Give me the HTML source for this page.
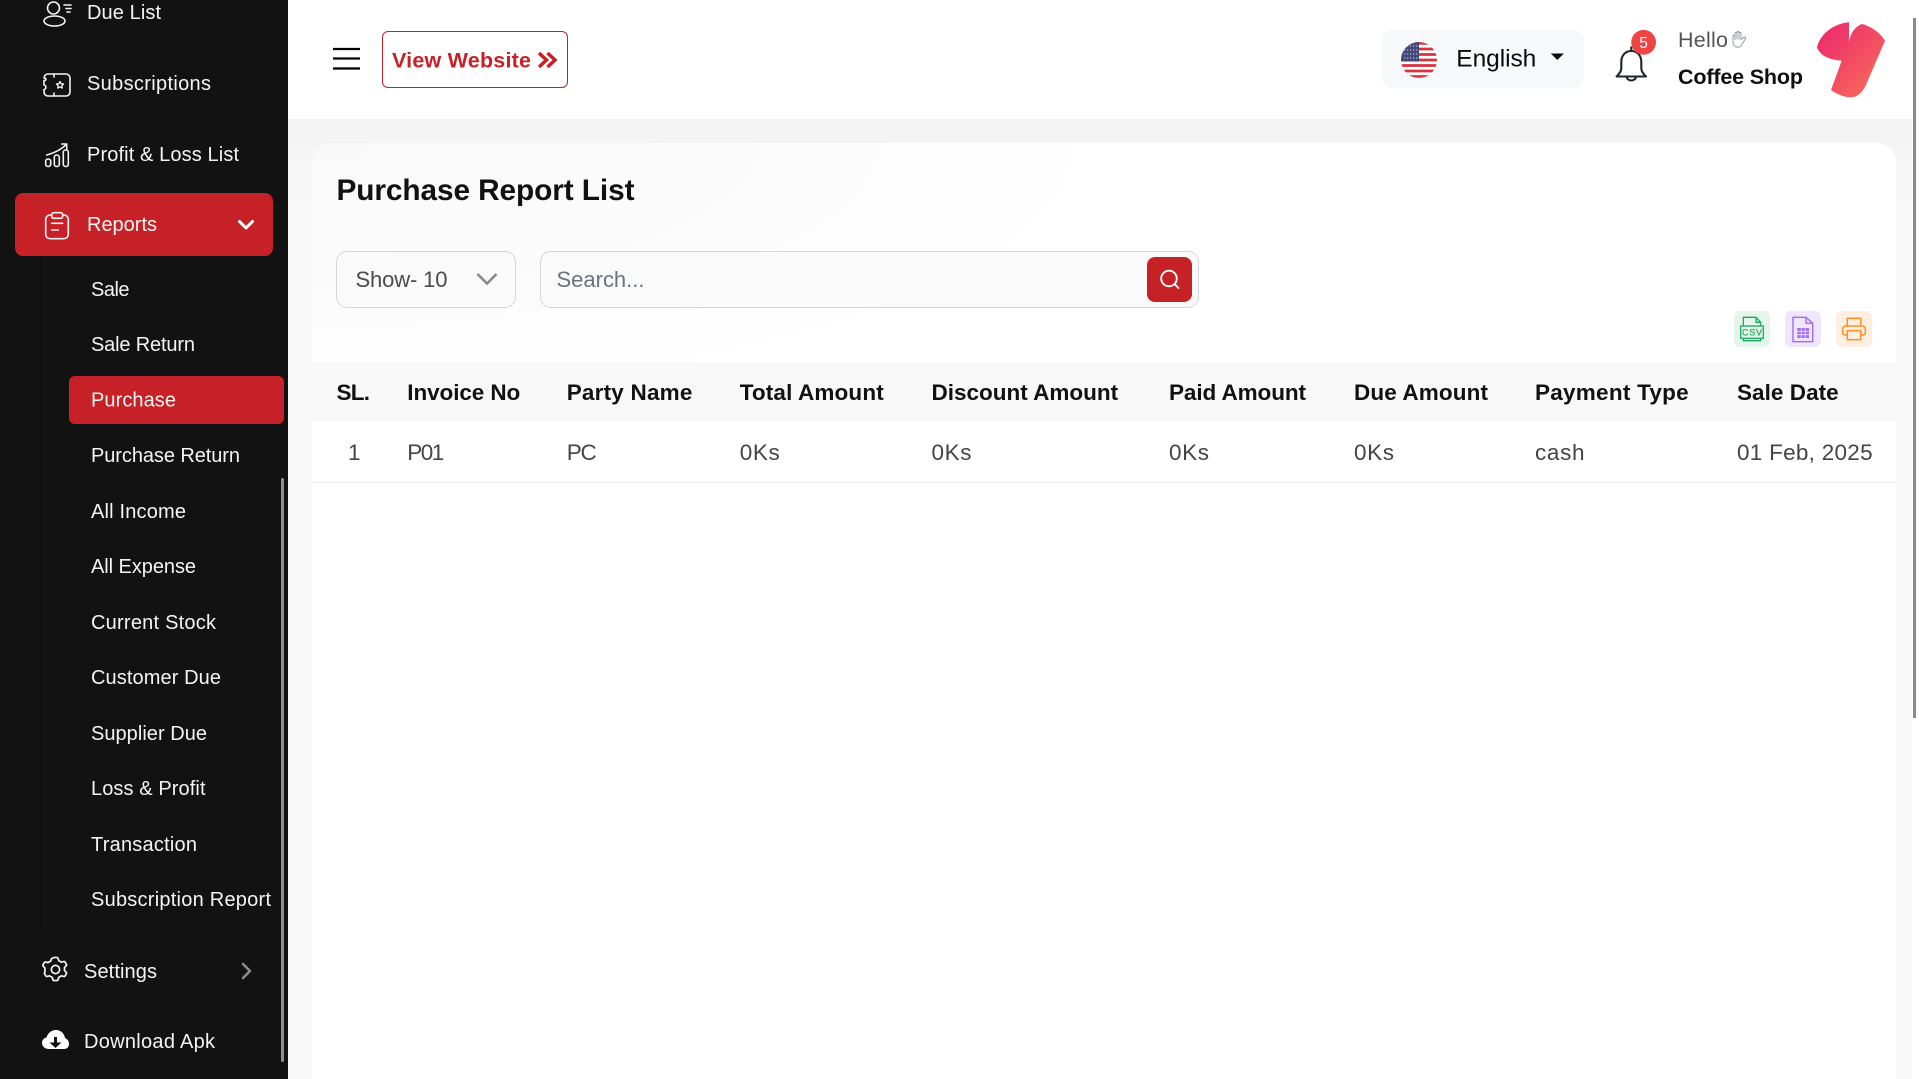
<!DOCTYPE html>
<html lang="en">
<head>
<meta charset="utf-8">
<title>Purchase Report List</title>
<style>
html,body{margin:0;padding:0;width:1919px;height:1079px;overflow:hidden;background:#fff}
div{position:absolute;box-sizing:border-box}
svg{position:absolute;left:0;top:0}
text{font-family:"Liberation Sans",Arial,sans-serif;white-space:pre}
.s{font-size:20px;fill:#f4f4f4}
.h{font-size:22.500px;font-weight:700;fill:#111}
.r{font-size:22.500px;fill:#444}
</style>
</head>
<body>
<div style="left:288px;top:119px;width:1624px;height:960px;background:linear-gradient(180deg,#f3f3f3 0,#f8f8f8 90px)"></div>
<div style="left:312px;top:143px;width:1584px;height:936px;background:radial-gradient(ellipse 800px 260px at 0 0,#f9f9f9,#fbfbfb 50%,#fff 100%),#fff;border-radius:20px 20px 0 0"></div>
<div style="left:312px;top:362px;width:1584px;height:60px;background:#f8f8f8"></div>
<div style="left:312px;top:422px;width:1584px;height:61px;background:#fff;border-bottom:1px solid #e8e8e8"></div>
<div style="left:336px;top:251px;width:180px;height:57px;background:#fafafa;border:1px solid #d6d6d6;border-radius:11px"></div>
<div style="left:540px;top:251px;width:659px;height:57px;background:#fafafa;border:1px solid #d6d6d6;border-radius:11px"></div>
<div style="left:1147px;top:257px;width:45px;height:45px;background:#c52127;border-radius:8px"></div>
<div style="left:382px;top:31px;width:186px;height:57px;border:1px solid #c52127;border-radius:6px"></div>
<div style="left:1382px;top:30px;width:202px;height:58px;background:#f7f8fa;border-radius:10px"></div>
<div style="left:1734px;top:311px;width:36px;height:36px;background:#e6f5ec;border-radius:6px"></div>
<div style="left:1785px;top:311px;width:36px;height:36px;background:#efe6fd;border-radius:6px"></div>
<div style="left:1836px;top:311px;width:36px;height:36px;background:#ffefe2;border-radius:6px"></div>
<div style="left:1913px;top:18px;width:3px;height:700px;background:#8a8a8a"></div>

<div style="left:0;top:0;width:288px;height:1079px;background:#121212"></div>
<div style="left:45px;top:256px;width:239px;height:675px;border:1px solid #171717;border-top:0;border-right:0"></div>
<div style="left:15px;top:193px;width:258px;height:63px;background:#c52127;border-radius:8px"></div>
<div style="left:69px;top:376px;width:215px;height:48px;background:#c52127;border-radius:6px"></div>
<div style="left:281px;top:478px;width:3px;height:584px;background:#8f8f8f;border-radius:2px"></div>

<svg width="1919" height="1079" viewBox="0 0 1919 1079" xmlns="http://www.w3.org/2000/svg">
<defs>
<linearGradient id="lg" gradientUnits="userSpaceOnUse" x1="1822" y1="30" x2="1880" y2="85"><stop offset="0" stop-color="#ec2c6c"/><stop offset="1" stop-color="#f8675a"/></linearGradient>
<clipPath id="fc"><circle cx="1419" cy="60" r="18"/></clipPath>
</defs>

<!-- sidebar icons -->
<g fill="none" stroke="#f4f4f4" stroke-width="1.600" stroke-linecap="round" stroke-linejoin="round">
<circle cx="53.500" cy="8" r="6"/><ellipse cx="54.500" cy="21" rx="10.500" ry="5"/>
<path d="M64 5h7M66 8.500h5M67 12h3"/>
<path d="M48 74H66a4 4 0 0 1 4 4V92a4 4 0 0 1-4 4H48a4 4 0 0 1-4-4V89.500c2.500 0 2.500-4.500 0-4.500V80.500c2.500 0 2.500-2.500 0-2.500a4 4 0 0 1 4-4z"/>
<path d="M54 74v3M54 93v3"/>
<path d="M60 81.500l1.100 2.200 2.500.3-1.800 1.700.5 2.400-2.300-1.200-2.300 1.200.5-2.400-1.800-1.700 2.500-.3z" stroke-width="1.300"/>
<rect x="45.700" y="159" width="5" height="7.500" rx="2.200"/><rect x="54.300" y="155" width="5" height="11.500" rx="2.200"/><rect x="63.300" y="150" width="5" height="16.500" rx="2.200"/>
<path d="M46.700 155C54 153 61 150 66.700 144M61.700 144H66.700V149"/>
<rect x="45.700" y="215" width="22.600" height="23.700" rx="4.500"/><rect x="51.700" y="212.700" width="11" height="5.600" rx="2" fill="#c52127"/>
<path d="M51.700 223.300H62.700M51.700 230H58.300"/>
<g transform="translate(42.500 956.500) scale(1.180)" stroke-width="1.450"><circle cx="11" cy="11" r="3.500"/><path d="M10 .8h2c.6 0 1 .3 1.200.8l.6 2c.8.3 1.500.7 2.100 1.200l2-.5c.5-.1 1 .1 1.300.5l1 1.700c.3.500.2 1-.2 1.400l-1.400 1.500c.1.800.1 1.600 0 2.400l1.400 1.500c.4.400.5.900.2 1.400l-1 1.700c-.3.400-.8.600-1.300.5l-2-.5c-.6.500-1.300.9-2.100 1.200l-.6 2c-.2.500-.6.800-1.200.8h-2c-.6 0-1-.3-1.200-.8l-.6-2c-.8-.3-1.500-.7-2.100-1.200l-2 .5c-.5.100-1-.1-1.300-.5l-1-1.700c-.3-.5-.2-1 .2-1.400L2.100 12.200c-.1-.8-.1-1.600 0-2.400L.7 8.300c-.4-.4-.5-.9-.2-1.400l1-1.700c.3-.4.8-.6 1.300-.5l2 .5c.6-.5 1.300-.9 2.100-1.200l.6-2C9 1.100 9.400.8 10 .8z"/></g>
</g>
<path d="M49 1049C44.500 1049 42 1046 42 1043C42 1040 44 1038 46.500 1037.500C48 1032.500 52 1030 56 1030C61 1030 64.500 1034 65 1038C67.500 1039 69 1041 69 1044C69 1047 67 1049 64 1049Z" fill="#fff"/>
<path d="M54 1037h3v5.500h4.500L55.500 1048l-6-5.500H54z" fill="#121212"/>
<path d="M239.500 221.500L246 228L252.500 221.500" fill="none" stroke="#fff" stroke-width="3" stroke-linecap="round" stroke-linejoin="round"/>
<path d="M243 964L250 971L243 978" fill="none" stroke="#8a8a8a" stroke-width="2.600" stroke-linecap="round" stroke-linejoin="round"/>

<!-- sidebar text -->
<text class="s" x="87" y="19" textLength="74" lengthAdjust="spacing">Due List</text>
<text class="s" x="87" y="90" textLength="124" lengthAdjust="spacing">Subscriptions</text>
<text class="s" x="87" y="161" textLength="152" lengthAdjust="spacing">Profit &amp; Loss List</text>
<text class="s" x="87" y="231" textLength="70" lengthAdjust="spacing">Reports</text>
<text class="s" x="91" y="296" textLength="38.500" lengthAdjust="spacing">Sale</text>
<text class="s" x="91" y="351" textLength="104" lengthAdjust="spacing">Sale Return</text>
<text class="s" x="91" y="406.500" textLength="85" lengthAdjust="spacing">Purchase</text>
<text class="s" x="91" y="462" textLength="149" lengthAdjust="spacing">Purchase Return</text>
<text class="s" x="91" y="518" textLength="95" lengthAdjust="spacing">All Income</text>
<text class="s" x="91" y="573" textLength="105" lengthAdjust="spacing">All Expense</text>
<text class="s" x="91" y="629" textLength="125" lengthAdjust="spacing">Current Stock</text>
<text class="s" x="91" y="684" textLength="130" lengthAdjust="spacing">Customer Due</text>
<text class="s" x="91" y="740" textLength="116" lengthAdjust="spacing">Supplier Due</text>
<text class="s" x="91" y="795" textLength="114.500" lengthAdjust="spacing">Loss &amp; Profit</text>
<text class="s" x="91" y="851" textLength="106" lengthAdjust="spacing">Transaction</text>
<text class="s" x="91" y="906" textLength="180" lengthAdjust="spacing">Subscription Report</text>
<text class="s" x="84" y="978" textLength="73" lengthAdjust="spacing">Settings</text>
<text class="s" x="84" y="1048" textLength="131" lengthAdjust="spacing">Download Apk</text>

<!-- header -->
<path d="M333 49H360M333 58.500H360M333 68.500H360" stroke="#000" stroke-width="2.200" fill="none"/>
<text x="392" y="67.500" font-size="21.500" font-weight="700" fill="#c52127" textLength="139" lengthAdjust="spacing">View Website</text>
<path d="M539 53L546.500 60L539 67M547.500 53L555 60L547.500 67" fill="none" stroke="#c52127" stroke-width="3.500"/>

<g clip-path="url(#fc)">
<rect x="1401" y="42" width="36" height="36" fill="#fff"/>
<path d="M1401 43.400h36M1401 49h36M1401 54.500h36M1401 60h36M1401 65.500h36M1401 71h36M1401 76.500h36" stroke="#d8333c" stroke-width="2.800"/>
<rect x="1401" y="42" width="18" height="19.500" fill="#41477b"/>
<path d="M1404 46h14M1404 50h14M1404 54h14M1404 58h14" stroke="#b9bcd4" stroke-width="1.300" stroke-dasharray="1.300 1.700"/>
</g>
<text x="1456.300" y="66.500" font-size="24.500" fill="#0b0b0b" textLength="80" lengthAdjust="spacing">English</text>
<path d="M1550.800 53.500H1563.800L1557.300 60Z" fill="#0b0b0b"/>

<path d="M1631.300 51C1624.800 51 1621.300 56 1621.300 62V68C1621.300 72 1618.800 74 1616.600 76.500H1646C1643.800 74 1641.300 72 1641.300 68V62C1641.300 56 1637.800 51 1631.300 51ZM1631.300 46.500V51M1626.800 77a4.500 3.500 0 0 0 9 0" fill="none" stroke="#1b2330" stroke-width="2.100" stroke-linejoin="round"/>
<circle cx="1643.600" cy="42.300" r="12.400" fill="#ef4444"/>
<text x="1643.600" y="48" font-size="15.500" fill="#fff" text-anchor="middle">5</text>

<text x="1678" y="47" font-size="21.500" fill="#555" textLength="50" lengthAdjust="spacing">Hello</text>
<g transform="translate(1731 31)" fill="none" stroke="#8c93a0" stroke-width=".9" stroke-linejoin="round"><path d="M5 16C3 15 2 13 2 11V5.500C2 4 4 4 4 5.500V2.500C4 1 6 1 6 2.500V1.500C6 0 8 0 8 1.500V2.500C8 1 10 1 10 2.500V8.500L12.500 6.500C14 5.500 15.500 7 14 8.500L10.500 14C10 15.500 9 16 8 16ZM4 5.500V9M6 2.500V8.500M8 1.500V8.500"/></g>
<text x="1678" y="84" font-size="21.500" font-weight="700" fill="#0f0f0f" textLength="125" lengthAdjust="spacing">Coffee Shop</text>
<path d="M1849 22.300C1832 24 1820 35 1817 47.300C1820 56 1830 60 1841.700 60.700L1831 90C1838 95 1846 97.500 1851 97.300C1860 97 1865 88 1867.300 81.700L1885 40.700C1880 32 1870 26 1861.700 24C1855 27 1850 33 1849 43.300Z" fill="url(#lg)"/>

<!-- heading + filters -->
<text x="336.500" y="200" font-size="29.800" font-weight="700" fill="#111" textLength="298" lengthAdjust="spacing">Purchase Report List</text>
<text x="355.500" y="287" font-size="22" fill="#4a4a4f" textLength="92" lengthAdjust="spacing">Show- 10</text>
<path d="M477.500 274L487 283.500L496.500 274" fill="none" stroke="#8a8a8a" stroke-width="2.600"/>
<text x="556.500" y="287" font-size="22" fill="#6b7280" textLength="88" lengthAdjust="spacing">Search...</text>
<circle cx="1169" cy="278.500" r="7.800" fill="none" stroke="#fff" stroke-width="1.900"/>
<path d="M1175 284.500L1178.500 288" stroke="#fff" stroke-width="1.900" stroke-linecap="round"/>

<!-- export icons -->
<g fill="none" stroke="#1bab60" stroke-width="1.300" transform="translate(1734 311)">
<path d="M9.300 15V6.300H22L26.700 11.300V15M22 6.300V11.300H26.700"/>
<rect x="6.700" y="15" width="22.600" height="12.300"/>
<path d="M9.300 27.300V29.700H26.700V27.300"/>
</g>
<text x="1742" y="335.500" font-size="9" fill="#1bab60" stroke="#1bab60" stroke-width=".2" textLength="20" lengthAdjust="spacing">CSV</text>
<g transform="translate(1785 311)">
<path d="M8 6.300H21L27.700 12.300V30.700H8Z M21 6.300V12.300H27.700" fill="none" stroke="#a06cf0" stroke-width="1.400"/>
<rect x="12.300" y="17" width="11.700" height="10" fill="#a06cf0"/>
<path d="M12.300 20.300H24M12.300 23.700H24M16.200 17V27M20.100 17V27" stroke="#efe6fd" stroke-width=".8"/>
</g>
<g fill="none" stroke="#ff9024" stroke-width="1.500" transform="translate(1836 311)">
<path d="M11.300 15V7.300H24.700V15"/>
<path d="M11.300 24H9A2.300 2.300 0 0 1 6.700 21.700V18A3 3 0 0 1 9.700 15H26.300A3 3 0 0 1 29.300 18V21.700A2.300 2.300 0 0 1 27 24H24.700"/>
<rect x="11.300" y="19.700" width="13.400" height="9"/>
</g>

<!-- table -->
<text class="h" x="336.500" y="400" textLength="33.500" lengthAdjust="spacing">SL.</text>
<text class="h" x="407.300" y="400" textLength="113" lengthAdjust="spacing">Invoice No</text>
<text class="h" x="566.700" y="400" textLength="125.700" lengthAdjust="spacing">Party Name</text>
<text class="h" x="739.700" y="400" textLength="144" lengthAdjust="spacing">Total Amount</text>
<text class="h" x="931.500" y="400" textLength="186.600" lengthAdjust="spacing">Discount Amount</text>
<text class="h" x="1169" y="400" textLength="137" lengthAdjust="spacing">Paid Amount</text>
<text class="h" x="1354" y="400" textLength="134" lengthAdjust="spacing">Due Amount</text>
<text class="h" x="1535" y="400" textLength="153.700" lengthAdjust="spacing">Payment Type</text>
<text class="h" x="1737" y="400" textLength="101.700" lengthAdjust="spacing">Sale Date</text>

<text class="r" x="348" y="460">1</text>
<text class="r" x="407.300" y="460" textLength="37" lengthAdjust="spacing">P01</text>
<text class="r" x="566.700" y="460" textLength="30" lengthAdjust="spacing">PC</text>
<text class="r" x="739.700" y="460" textLength="40" lengthAdjust="spacing">0Ks</text>
<text class="r" x="931.500" y="460" textLength="40" lengthAdjust="spacing">0Ks</text>
<text class="r" x="1169" y="460" textLength="40" lengthAdjust="spacing">0Ks</text>
<text class="r" x="1354" y="460" textLength="40" lengthAdjust="spacing">0Ks</text>
<text class="r" x="1535" y="460" textLength="49.500" lengthAdjust="spacing">cash</text>
<text class="r" x="1737" y="460" textLength="135.600" lengthAdjust="spacing">01 Feb, 2025</text>
</svg>
</body>
</html>
